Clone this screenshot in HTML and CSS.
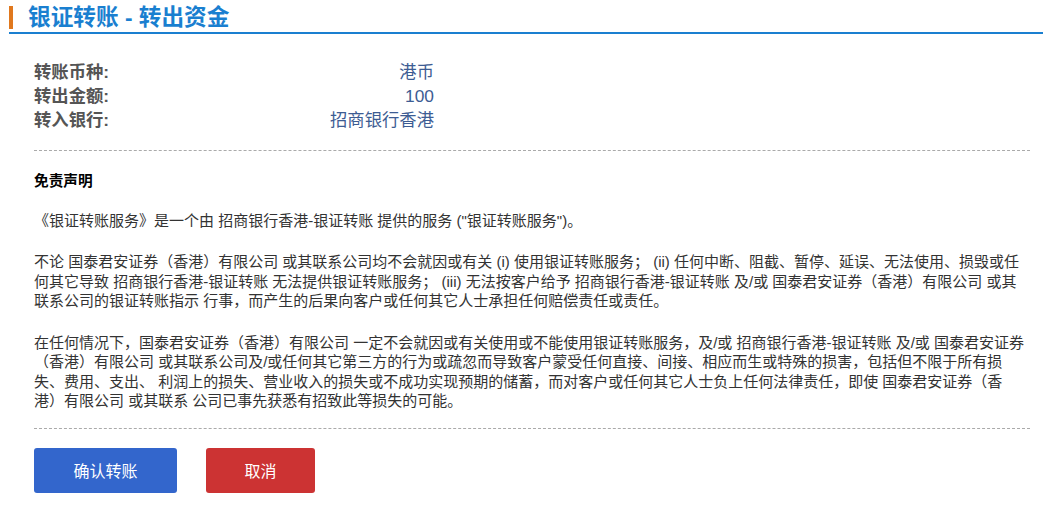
FILE: index.html
```html
<!DOCTYPE html>
<html>
    <head>
        <meta charset="UTF-8">
        <title>银证转账 - 转出资金</title>
        <link rel="stylesheet" href="styles.css">
    </head>
    <body>
        <div class="header">
            <h1 class="title">银证转账 - 转出资金</h1>
        </div>
        <div class="content">
            <table class="summary">
                <tbody>
                    <tr><td class="label">转账币种:</td><td class="value">港币</td></tr>
                    <tr><td class="label">转出金额:</td><td class="value">100</td></tr>
                    <tr><td class="label">转入银行:</td><td class="value">招商银行香港</td></tr>
                </tbody>
            </table>
            <div class="disclaimer">
                <h4>免责声明</h4>
                <p>《银证转账服务》是一个由 招商银行香港-银证转账 提供的服务 ("银证转账服务")。</p>
                <p>不论 国泰君安证券（香港）有限公司 或其联系公司均不会就因或有关 (i) 使用银证转账服务； (ii) 任何中断、阻截、暂停、延误、无法使用、损毁或任何其它导致 招商银行香港-银证转账 无法提供银证转账服务； (iii) 无法按客户给予 招商银行香港-银证转账 及/或 国泰君安证券（香港）有限公司 或其联系公司的银证转账指示 行事，而产生的后果向客户或任何其它人士承担任何赔偿责任或责任。</p>
                <p>在任何情况下，国泰君安证券（香港）有限公司 一定不会就因或有关使用或不能使用银证转账服务，及/或 招商银行香港-银证转账 及/或 国泰君安证券（香港）有限公司 或其联系公司及/或任何其它第三方的行为或疏忽而导致客户蒙受任何直接、间接、相应而生或特殊的损害，包括但不限于所有损失、费用、支出、 利润上的损失、营业收入的损失或不成功实现预期的储蓄，而对客户或任何其它人士负上任何法律责任，即使 国泰君安证券（香港）有限公司 或其联系 公司已事先获悉有招致此等损失的可能。</p>
            </div>
            <div class="actions">
                <button class="btn btn--confirm">确认转账</button>
                <button class="btn btn--cancel">取消</button>
            </div>
        </div>
    </body>
</html>
```

FILE: styles.css
```css
body {
    font-family:"Liberation Sans", Arial, "Noto Sans CJK SC", sans-serif;
    font-size:15px;
    margin:0;
    padding:0;
    color:#333;
    text-spacing-trim:space-all
}
.header {
    margin-left:9px;
    padding-top:6px;
    border-bottom:2px solid #1a7fd0
}
.title {
    margin:0 0 3px 0;
    padding-left:15px;
    border-left:4px solid #e0781e;
    font-size:22.67px;
    line-height:23px;
    font-weight:bold;
    color:#1a7fd0
}
.content {
    margin:0 13px 0 34px
}
.summary {
    margin-top:26px;
    width:400px;
    border-spacing:0
}
.summary td {
    padding:0;
    font-size:17.33px;
    line-height:24px
}
.label {
    font-weight:bold;
    color:#555
}
.value {
    text-align:right;
    color:#3d5c93
}
.disclaimer {
    margin-top:18px;
    padding:21px 0 17px 0;
    border-top:1px dashed #aaa;
    border-bottom:1px dashed #aaa
}
.disclaimer h4 {
    margin:0;
    font-size:14.67px;
    line-height:19.5px;
    color:#000
}
.disclaimer p {
    margin:19px 0 0 0;
    padding-right:4px;
    line-height:19.5px
}
.disclaimer p + p {
    margin-top:22px
}
.actions {
    display:flex;
    gap:29px;
    padding-top:19px
}
.btn {
    height:45px;
    border:0;
    border-radius:3px;
    color:#fff;
    font-family:"Noto Sans CJK SC", sans-serif;
    font-size:16px;
    cursor:pointer
}
.btn--confirm {
    width:143px;
    background:#3366cc
}
.btn--cancel {
    width:109px;
    background:#cc3333
}
```
